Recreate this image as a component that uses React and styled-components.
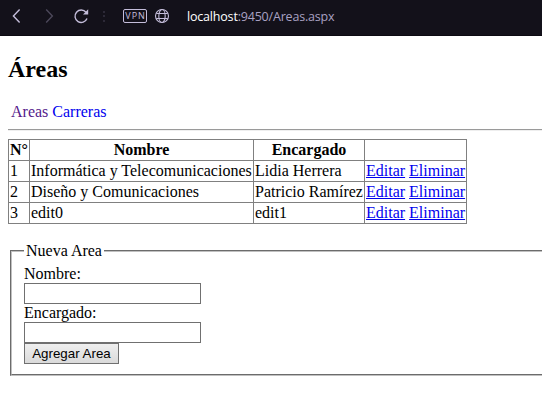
import React from "react";
import styled, { createGlobalStyle } from "styled-components";

const GlobalStyle = createGlobalStyle`
  *, *::before, *::after { box-sizing: border-box; }
  body {
    margin: 0;
    background: #fff;
    color: #000;
    font: 16px/18px "Liberation Serif", "Times New Roman", serif;
  }
`;

const Toolbar = styled.header`
  display: flex;
  align-items: center;
  height: 36px;
  padding: 0 0 3px 9px;
  background: #13111a;
  border-bottom: 1px solid #0c0a12;
  color: #c4bdda;
`;

const ToolIcon = styled.svg`
  display: block;
  flex: none;
  width: 16px;
  height: 16px;
  margin-right: ${(p) => p.$gap}px;
  fill: none;
  stroke: ${(p) => (p.$dim ? "#4c485a" : "#c4bdda")};
  stroke-width: ${(p) => p.$weight || 1.4};
`;

const ArrowHead = styled.path`
  fill: #c4bdda;
  stroke: none;
`;

const Separator = styled.span`
  width: 2px;
  height: 11px;
  margin-right: 18px;
  background: repeating-linear-gradient(#2c2937 0 2px, transparent 2px 4.5px);
`;

const VpnBadge = styled.span`
  width: 24px;
  height: 14px;
  margin-right: 7px;
  padding-left: 1px;
  border: 1px solid #c4bdda;
  border-radius: 2px;
  font: 500 9px/12px "Open Sans", sans-serif;
  letter-spacing: 0.9px;
  text-align: center;
`;

const Address = styled.span`
  padding-top: 2px;
  font: 12.5px/16px "Open Sans", sans-serif;
  letter-spacing: -0.19px;
  color: #a9a1c2;
  white-space: nowrap;
`;

const Host = styled.span`
  color: #fff;
`;

const Page = styled.main`
  padding: 20px 0 0 8px;
`;

const Title = styled.h2`
  height: 27px;
  margin: 0;
  font-size: 24px;
  line-height: 27px;
  font-weight: bold;
`;

const Nav = styled.nav`
  display: flex;
  gap: 4px;
  height: 18px;
  margin: 20px 0 8px 3px;
`;

const NavLink = styled.a`
  color: ${(p) => (p.$visited ? "#551a8b" : "#0000ee")};
  text-decoration: none;
`;

const Rule = styled.hr`
  height: 2px;
  margin: 0 0 8px;
  border: 0;
  border-top: 1px solid #9a9a9a;
  border-bottom: 1px solid #eee;
`;

const Table = styled.table`
  width: 459px;
  table-layout: fixed;
  border-collapse: collapse;
  white-space: nowrap;

  th, td {
    padding: 1px;
    border: 1px solid #808080;
    line-height: 18px;
  }
  th { font-weight: bold; }
  tr { height: 21px; }
`;

const Column = styled.col`
  width: ${(p) => p.$width}px;
`;

const ActionLink = styled.a`
  color: #0000ee;
  text-decoration: underline;
  cursor: pointer;
`;

const AreaForm = styled.fieldset`
  height: 134px;
  margin: 18px 0 0 2px;
  padding: 5px 12px 0;
  border: 2px groove #c0c0c0;
  border-right: 0;
`;

const Legend = styled.legend`
  height: 18px;
  padding: 0 2px;
`;

const Label = styled.label`
  display: block;
  height: 18px;
`;

const TextInput = styled.input`
  display: block;
  width: 177px;
  height: 21px;
  margin: 0;
  padding: 1px 2px;
  border: 1px solid #707070;
  border-radius: 0;
  background: #fff;
`;

const SubmitButton = styled.button`
  display: block;
  width: 95px;
  height: 21px;
  padding: 0;
  border: 1px solid #707070;
  border-radius: 0;
  background: linear-gradient(#efefef, #dadada);
  color: #000;
  font: 13.333px/19px "Liberation Sans", Arial, sans-serif;
  white-space: nowrap;
`;

const areas = [
  { id: 1, name: "Informática y Telecomunicaciones", manager: "Lidia Herrera" },
  { id: 2, name: "Diseño y Comunicaciones", manager: "Patricio Ramírez" },
  { id: 3, name: "edit0", manager: "edit1" },
];

function BrowserBar() {
  return (
    <Toolbar>
      <ToolIcon $gap={16} viewBox="0 0 16 16">
        <path d="M10.6 1.4 4.4 8l6.2 6.6" />
      </ToolIcon>
      <ToolIcon $gap={16} $dim viewBox="0 0 16 16">
        <path d="M5.2 1.4 11.4 8l-6.2 6.6" />
      </ToolIcon>
      <ToolIcon $gap={14} viewBox="0 0 16 16">
        <path d="M14 10.5A6.2 6.2 0 1 1 13 4.3" />
        <ArrowHead d="M15.2 1.2v5.2H10Z" />
      </ToolIcon>
      <Separator />
      <VpnBadge>VPN</VpnBadge>
      <ToolIcon $gap={17} $weight={1.1} viewBox="0 0 16 16">
        <circle cx="8" cy="8" r="6.5" />
        <ellipse cx="8" cy="8" rx="3.2" ry="6.5" />
        <path d="M2.3 5.5h11.4M2.3 10.5h11.4" />
      </ToolIcon>
      <Address>
        <Host>localhost</Host>:9450/Areas.aspx
      </Address>
    </Toolbar>
  );
}

export default function App() {
  return (
    <>
      <GlobalStyle />
      <BrowserBar />
      <Page>
        <Title>Áreas</Title>
        <Nav>
          <NavLink $visited>Areas</NavLink>
          <NavLink>Carreras</NavLink>
        </Nav>
        <Rule />
        <Table>
          <colgroup>
            <Column $width={21} />
            <Column $width={224} />
            <Column $width={111} />
            <Column $width={102} />
          </colgroup>
          <thead>
            <tr>
              <th>N°</th>
              <th>Nombre</th>
              <th>Encargado</th>
              <th />
            </tr>
          </thead>
          <tbody>
            {areas.map((area) => (
              <tr key={area.id}>
                <td>{area.id}</td>
                <td>{area.name}</td>
                <td>{area.manager}</td>
                <td>
                  <ActionLink>Editar</ActionLink> <ActionLink>Eliminar</ActionLink>
                </td>
              </tr>
            ))}
          </tbody>
        </Table>
        <AreaForm>
          <Legend>Nueva Area</Legend>
          <Label htmlFor="nombre">Nombre:</Label>
          <TextInput id="nombre" />
          <Label htmlFor="encargado">Encargado:</Label>
          <TextInput id="encargado" />
          <SubmitButton type="button">Agregar Area</SubmitButton>
        </AreaForm>
      </Page>
    </>
  );
}
